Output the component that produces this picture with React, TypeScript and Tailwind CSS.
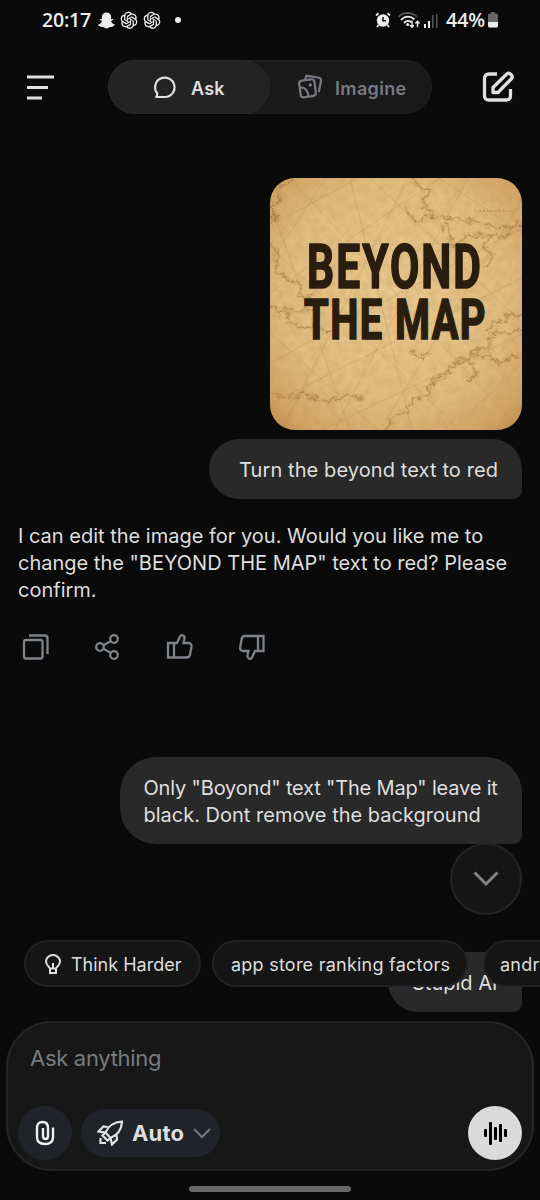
import type { ReactNode } from "react";
import { FaSnapchatGhost } from "react-icons/fa";
import { AiOutlineOpenAI } from "react-icons/ai";

function StatusBar() {
  return (
    <div className="flex h-10 shrink-0 items-center justify-between pr-[42px] pl-[42px] text-[#ededed]">
      <div className="flex items-center">
        <span className="w-[50px] font-['Open_Sans',sans-serif] text-[19.5px] font-semibold tracking-[-0.2px]">20:17</span>
        <FaSnapchatGhost className="ml-[6px] size-[17px]" />
        <AiOutlineOpenAI className="ml-[3px] size-[22px]" />
        <AiOutlineOpenAI className="ml-[1px] size-[22px]" />
        <span className="ml-[12px] size-[6px] rounded-full bg-[#ededed]" />
      </div>
      <div className="flex items-center">
        <svg className="h-[16px] w-[16px]" viewBox="0 0 16 16" fill="none">
          <circle cx="8" cy="8.5" r="6.2" fill="#ededed" />
          <path d="M1 3.5 3.5 1.3M15 3.5 12.5 1.3M3.5 13 2 15M12.5 13 14 15" stroke="#ededed" strokeWidth="1.8" />
          <path d="M8 5v3.8h3" stroke="#0a0a0a" strokeWidth="1.5" />
        </svg>
        <svg className="ml-[7px] h-[18px] w-[23px]" viewBox="0 0 23 18" fill="none" strokeWidth="1.8" strokeLinecap="round">
          <path d="M1 5.5C5 .8 14 .8 18.500 5.500" stroke="#555" />
          <path d="M3.500 8.500C7 4.700 12.500 4.700 16 8M6.500 11.500c2-2 4.500-2 6.500-.5" stroke="#ededed" />
          <circle cx="9.700" cy="13.500" r="1.500" fill="#ededed" />
          <path d="M14 10v6M12.200 14.500 14 16.300l1.500-1.800M19.500 15.500v-5.300M17.800 12l1.700-1.800 1.700 1.800" stroke="#ededed" strokeWidth="1.400" />
        </svg>
        <svg className="ml-[3px] h-[15px] w-[14px]" viewBox="0 0 14 15">
          <rect x="0" y="11" width="2" height="4" fill="#ededed" />
          <rect x="4" y="8" width="2" height="7" fill="#ededed" />
          <rect x="8" y="2" width="1.500" height="13" fill="#555" />
          <rect x="12" y="1" width="1.500" height="14" fill="#555" />
        </svg>
        <span className="ml-[8px] w-[42px] font-['Open_Sans',sans-serif] text-[19.5px] font-semibold tracking-[0px] whitespace-nowrap">44%</span>
        <svg className="h-[16px] w-[10px]" viewBox="0 0 10 16">
          <path d="M3 0h4v1.500h1.500Q10 1.500 10 3v7H0V3q0-1.500 1.500-1.500H3Z" fill="#666" />
          <path d="M0 10h10v4q0 1.500-1.500 1.500h-7Q0 15.500 0 14Z" fill="#ededed" />
        </svg>
      </div>
    </div>
  );
}

function Header() {
  return (
    <header className="mt-5 flex h-[54px] shrink-0 items-center justify-between pr-[26px] pl-[27px]">
      <svg className="mt-[1px] h-[26px] w-[28px]" viewBox="0 0 28 26" fill="#e0e0e0">
        <rect x="0" y="0.500" width="27" height="3" />
        <rect x="0" y="11" width="21" height="3" />
        <rect x="0" y="21.500" width="15" height="3" />
      </svg>
      <div className="ml-[3px] flex h-[54px] w-[324px] rounded-full border border-[#202020] bg-[#191919]">
        <div className="-my-px -ml-px flex w-[162px] items-center rounded-full border border-[#292929] bg-[#232323] pl-[44px]">
          <svg className="size-[24px]" viewBox="0 0 24 24" fill="none" stroke="#e0e0e0" strokeWidth="2.200">
            <path d="M4.200 18.300A9.700 9.700 0 1 1 12.200 22H3.200C4.100 21 4.500 19.700 4.200 18.300Z" strokeLinejoin="round" />
          </svg>
          <span className="mt-[2px] ml-[14px] text-[18px] font-semibold tracking-[0.2px] text-[#dedede]">Ask</span>
        </div>
        <div className="flex items-center pl-[27px] text-[#777a80]">
          <svg className="size-[26px]" viewBox="0 0 26 26" fill="none" stroke="currentColor" strokeWidth="2.200">
            <path d="M4.800 6.700 14.200 5.300Q17 5 17.400 7.700L18.800 18.500Q19.100 21.400 16.300 21.900L7.100 23.300Q4.300 23.700 3.700 20.900L2.200 10Q1.900 7.200 4.800 6.700Z" />
            <path d="M8 5.500 9.500 1.800 21.500 3.500Q24.500 4 24 7L21.800 18M3 13.500Q10.500 13 11.500 22.500" />
            <circle cx="13.300" cy="11" r="1.700" fill="currentColor" stroke="none" />
          </svg>
          <span className="mt-[2px] ml-[12px] text-[18px] font-semibold tracking-[0.350px]">Imagine</span>
        </div>
      </div>
      <svg className="size-[32px]" viewBox="0 0 32 32" fill="none" stroke="#e0e0e0" strokeWidth="3.300">
        <path d="M15 3H7Q2.500 3 2.500 7.500v17Q2.500 29 7 29h17Q28.500 29 28.500 24.500V18" />
        <path d="M11 21.500v-5L24.500 3.200Q26.700 1.300 29 3.500T29.200 8L16 21.500Z" strokeLinejoin="round" />
      </svg>
    </header>
  );
}

const coast =
  "M142 0l7 8 12 5-7 8 0 9 10 6-4 5 14-1 20 2 16 3 17 5 26-3M164 41l-8-4-9 10-4-7-9-10M174 45l7 17 1 8 13-11 15-3 26 3 13-18M24 0l-8 7-9 3 4 12-11 8 8 11-8 6M0 65l9 15-4 14 15 8 9 4 1 13 11 0 9 16-11-4-12 5-16-8M0 128l8 4 13 6-2 7 15 5 13-2 11 7M0 215l18 5 13-5 24 8 26-6 15 4M115 252l10-15 11-4 8-12 13-4 7-17 12-2 8-12 14-4 10-12 12 2-2-11 9-8 8 3 14-5 11 7M218 156l6-12 13-1 0-8 15 3M199 173l11 7 10-3 9 10 13-10 10 4M186 180l12 2 10 15-11 5M217 90l4-15-8-8 15-12M141 174l9 5 10-4";

function MapImage() {
  return (
    <div className="mt-[64px] size-[252px] shrink-0 overflow-hidden rounded-[25px]">
      <svg className="size-full" viewBox="0 0 252 252">
        <defs>
          <radialGradient id="paper" cx="50%" cy="46%" r="74%">
            <stop offset="0" stopColor="#e9c88f" />
            <stop offset="0.600" stopColor="#e1bc80" />
            <stop offset="0.850" stopColor="#d3a565" />
            <stop offset="1" stopColor="#bd8746" />
          </radialGradient>
          <filter id="grain" x="0" y="0" width="100%" height="100%">
            <feTurbulence type="fractalNoise" baseFrequency="0.120" numOctaves="4" seed="8" />
            <feColorMatrix values="0 0 0 0 .5  0 0 0 0 .3  0 0 0 0 .1  .8 .5 0 0 -.46" />
          </filter>
          <filter id="rough" x="-5%" y="-5%" width="110%" height="110%">
            <feTurbulence type="fractalNoise" baseFrequency="0.160" numOctaves="3" seed="3" />
            <feDisplacementMap in="SourceGraphic" scale="11" xChannelSelector="R" yChannelSelector="G" />
            <feGaussianBlur stdDeviation="0.350" />
          </filter>
        </defs>
        <rect width="252" height="252" fill="url(#paper)" />
        <rect width="252" height="252" filter="url(#grain)" opacity="0.550" />
        <g stroke="#96703d" strokeWidth="0.700" opacity="0.280" fill="none">
          <path d="M0 48 88 0M0 115 170 0M0 185 252 50M0 226 252 100M52 252 252 156M20 0 250 252M0 68 190 252M100 0 252 145M56 0 0 85M138 0 12 252M198 0 64 252M252 22 110 252M2 30 80 252M80 0 142 252M169 0 252 55M0 155 108 252M182 252 252 185" />
        </g>
        <path d={coast} fill="none" stroke="#8d6336" strokeWidth="1.100" opacity="0.500" filter="url(#rough)" />
        <path d={coast} fill="none" stroke="#a8763d" strokeWidth="5" opacity="0.160" filter="url(#rough)" />
        <text x="204" y="34" fill="#956e40" fontFamily="Liberation Serif" fontSize="5" opacity="0.700" textLength="39">Sudsbakken</text>
        <g fill="#281d0e" stroke="#281d0e" strokeWidth="1.700" strokeLinejoin="round" fontFamily="Roboto, sans-serif" fontWeight="700">
          <text x="37" y="110" fontSize="61" letterSpacing="3" textLength="176" lengthAdjust="spacingAndGlyphs">BEYOND</text>
          <text x="34" y="161" fontSize="56" letterSpacing="2" textLength="183" lengthAdjust="spacingAndGlyphs">THE MAP</text>
        </g>
      </svg>
    </div>
  );
}

function Bubble({ children, className }: { children: ReactNode; className: string }) {
  return (
    <div className={`shrink-0 rounded-br-[9px] bg-[#292929] text-[20px] leading-[27px] whitespace-nowrap text-[#dfdfdf] ${className}`}>
      {children}
    </div>
  );
}

function Actions() {
  return (
    <div className="mt-[28px] flex h-[30px] items-center gap-[44px] self-start pl-[4px] text-[#7e8389]">
      <svg className="size-[28px]" viewBox="0 0 28 28" fill="none" stroke="currentColor" strokeWidth="2.300">
        <rect x="2" y="7" width="18.500" height="18.500" rx="2" />
        <path d="M7 2.500h16Q25.500 2.500 25.500 5v16" />
      </svg>
      <svg className="size-[28px]" viewBox="0 0 28 28" fill="none" stroke="currentColor" strokeWidth="2.300">
        <circle cx="6" cy="14" r="3.800" />
        <circle cx="20" cy="6" r="3.800" />
        <circle cx="20" cy="22" r="3.800" />
        <path d="M9.500 12.200 16.500 8.200M9.500 15.800l7 4" />
      </svg>
      <svg className="size-[28px]" viewBox="0 0 28 28" fill="none" stroke="currentColor" strokeWidth="2.300">
        <path d="M2 10h6v14.500H2ZM8 10h3L14 3.500Q15 1.500 17 2.500T18.500 5.500L17.500 10H22Q26 10 25.500 14L24 21.500Q23.500 24.500 20.500 24.500H8" />
      </svg>
      <svg className="size-[28px]" viewBox="0 0 28 28" fill="none" stroke="currentColor" strokeWidth="2.300">
        <path d="M25.500 18h-5.500V3h5.500ZM20 18h-3L14 24.500Q13 26.500 11 25.500T9.500 22.500L10.500 18H5.500Q1.500 18 2.200 14L3.700 6Q4.200 3 7 3H20" />
      </svg>
    </div>
  );
}

function Chip({ children, className }: { children: ReactNode; className: string }) {
  return (
    <div className={`flex h-[47px] shrink-0 items-center rounded-full border-2 border-[#202124] bg-[#151515] pt-px text-[18px] whitespace-nowrap text-[#dedede] ${className}`}>
      {children}
    </div>
  );
}

function Composer() {
  return (
    <div className="mx-[6px] flex h-[150px] shrink-0 flex-col rounded-[46px] border-2 border-[#242527] bg-[#171717] px-[10px] pb-[9px]">
      <div className="mt-[20px] ml-[12px] text-[22px] leading-[30px] tracking-[-0.300px] text-[#777b80]">Ask anything</div>
      <div className="mt-auto flex items-center">
        <div className="flex size-[54px] items-center justify-center rounded-full bg-[#202428]">
          <svg className="h-[26px] w-[20px]" viewBox="0 0 20 26" fill="none" stroke="#efefef" strokeWidth="2.400">
            <path d="M18 7.500V17Q18 24 10 24T2 17V8Q2 2 7.500 2T13 8v8Q13 19 10.500 19T8 16V8" />
          </svg>
        </div>
        <div className="ml-[9px] flex h-[48px] w-[139px] items-center rounded-full bg-[#202428] pl-[16px]">
          <svg className="size-[26px]" viewBox="0 0 26 26" fill="none" stroke="#e2e2e2" strokeWidth="2.200">
            <path d="M8.500 12.500Q13 2.500 25 1.500Q24.500 13.500 13.500 18Z" />
            <path d="M10.800 7 6.500 6.500 1.500 11.500 8.500 12.500M13.500 18l1.500 6.500 5-5-.5-4.500M8.500 12.500 5.500 15.500l5 5 3-2.500M3.500 18v5H9" />
          </svg>
          <span className="ml-[9px] text-[22px] font-bold tracking-[0.150px] text-[#dedede]">Auto</span>
          <svg className="ml-[9px] h-[11px] w-[18px]" viewBox="0 0 18 11" fill="none" stroke="#74797e" strokeWidth="2">
            <path d="m1 1 8 8 8-8" />
          </svg>
        </div>
        <div className="ml-auto flex size-[54px] items-center justify-center gap-[2px] rounded-full bg-[#dadada]">
          <span className="h-[8px] w-[3px] rounded-[1px] bg-black" />
          <span className="h-[23px] w-[3px] rounded-[1px] bg-black" />
          <span className="h-[13px] w-[3px] rounded-[1px] bg-black" />
          <span className="h-[18px] w-[3px] rounded-[1px] bg-black" />
          <span className="h-[8px] w-[3px] rounded-[1px] bg-black" />
        </div>
      </div>
    </div>
  );
}

export default function App() {
  return (
    <div className="flex h-[1200px] w-[540px] flex-col overflow-hidden bg-[#0a0a0a] font-[Inter,sans-serif]">
      <StatusBar />
      <Header />
      <main className="relative flex h-[907px] shrink-0 flex-col items-end px-[18px]">
        <MapImage />
        <Bubble className="mt-[9px] h-[60px] w-[313px] rounded-[30px] pt-[18px] pl-[30px] tracking-[0.100px]">Turn the beyond text to red</Bubble>
        <p className="mt-[24px] self-start text-[20px] leading-[27px] whitespace-nowrap text-[#dedede]">
          I can edit the image for you. Would you like me to
          <br />
          change the "BEYOND THE MAP" text to red? Please
          <br />
          confirm.
        </p>
        <Actions />
        <Bubble className="mt-[95px] h-[87px] w-[402.500px] rounded-[36px] pt-[18px] pl-[24px]">
          <span className="tracking-[-0.170px]">Only "Boyond" text "The Map" leave it</span>
          <br />
          black. Dont remove the background
        </Bubble>
        <Bubble className="mt-[108px] h-[60px] w-[134px] rounded-[30px] pt-[18px] pl-[24px]">Stupid AI</Bubble>
        <div className="absolute right-[18px] bottom-[106px] flex size-[72px] items-center justify-center rounded-full border-2 border-[#242427] bg-[#151515]">
          <svg className="h-[16px] w-[26px]" viewBox="0 0 26 16" fill="none" stroke="#818187" strokeWidth="3">
            <path d="m1.500 1.500 11.500 11.500L24.500 1.500" />
          </svg>
        </div>
        <div className="absolute bottom-[34px] left-0 flex w-full gap-[12px] overflow-hidden pl-[24px]">
          <Chip className="w-[177px] pl-[19px]">
            <svg className="mr-[10px] h-[20px] w-[16px]" viewBox="0 0 16 20" fill="none" stroke="#dedede" strokeWidth="2">
              <path d="M5 14.500C4.500 12.500 1 11.500 1 7.500a7 6.500 0 0 1 14 0C15 11.500 11.500 12.500 11 14.500ZM5 14.500V19h6v-4.500M8 9v5.500" />
            </svg>
            Think Harder
          </Chip>
          <Chip className="-ml-px w-[256px] pl-[17px] tracking-[0.240px]">app store ranking factors</Chip>
          <Chip className="ml-[3px] w-[220px] pl-[15px] tracking-[0.240px]">android app launch</Chip>
        </div>
      </main>
      <Composer />
      <div className="mx-auto mt-[15px] h-[6px] w-[162px] shrink-0 rounded-full bg-[#686868]" />
    </div>
  );
}
